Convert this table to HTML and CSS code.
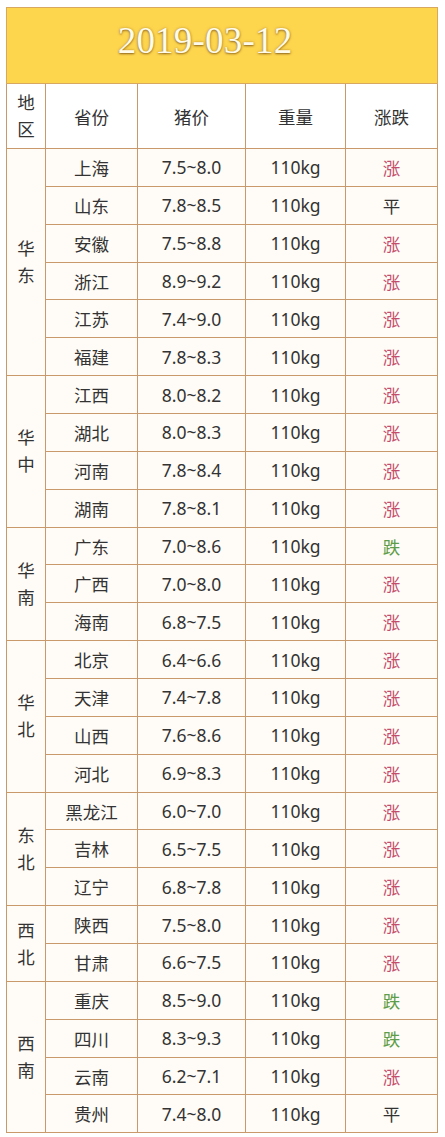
FILE: index.html
```html
<!DOCTYPE html>
<html lang="zh">
<head>
<meta charset="utf-8">
<title>2019-03-12 猪价</title>
<link rel="stylesheet" href="styles.css">
</head>
<body>
<div class="page">
<table class="price">
  <colgroup>
    <col class="c-region"><col class="c-prov"><col class="c-price"><col class="c-weight"><col class="c-chg">
  </colgroup>
  <thead>
    <tr class="title-row"><th colspan="5"><span class="title">2019-03-12</span></th></tr>
    <tr class="head-row">
      <th class="region">地<br>区</th><th>省份</th><th>猪价</th><th>重量</th><th>涨跌</th>
    </tr>
  </thead>
  <tbody>
    <tr><td class="region" rowspan="6">华<br>东</td><td>上海</td><td>7.5~8.0</td><td>110kg</td><td class="up">涨</td></tr>
    <tr><td>山东</td><td>7.8~8.5</td><td>110kg</td><td class="flat">平</td></tr>
    <tr><td>安徽</td><td>7.5~8.8</td><td>110kg</td><td class="up">涨</td></tr>
    <tr><td>浙江</td><td>8.9~9.2</td><td>110kg</td><td class="up">涨</td></tr>
    <tr><td>江苏</td><td>7.4~9.0</td><td>110kg</td><td class="up">涨</td></tr>
    <tr><td>福建</td><td>7.8~8.3</td><td>110kg</td><td class="up">涨</td></tr>

    <tr><td class="region" rowspan="4">华<br>中</td><td>江西</td><td>8.0~8.2</td><td>110kg</td><td class="up">涨</td></tr>
    <tr><td>湖北</td><td>8.0~8.3</td><td>110kg</td><td class="up">涨</td></tr>
    <tr><td>河南</td><td>7.8~8.4</td><td>110kg</td><td class="up">涨</td></tr>
    <tr><td>湖南</td><td>7.8~8.1</td><td>110kg</td><td class="up">涨</td></tr>

    <tr><td class="region" rowspan="3">华<br>南</td><td>广东</td><td>7.0~8.6</td><td>110kg</td><td class="down">跌</td></tr>
    <tr><td>广西</td><td>7.0~8.0</td><td>110kg</td><td class="up">涨</td></tr>
    <tr><td>海南</td><td>6.8~7.5</td><td>110kg</td><td class="up">涨</td></tr>

    <tr><td class="region" rowspan="4">华<br>北</td><td>北京</td><td>6.4~6.6</td><td>110kg</td><td class="up">涨</td></tr>
    <tr><td>天津</td><td>7.4~7.8</td><td>110kg</td><td class="up">涨</td></tr>
    <tr><td>山西</td><td>7.6~8.6</td><td>110kg</td><td class="up">涨</td></tr>
    <tr><td>河北</td><td>6.9~8.3</td><td>110kg</td><td class="up">涨</td></tr>

    <tr><td class="region" rowspan="3">东<br>北</td><td>黑龙江</td><td>6.0~7.0</td><td>110kg</td><td class="up">涨</td></tr>
    <tr><td>吉林</td><td>6.5~7.5</td><td>110kg</td><td class="up">涨</td></tr>
    <tr><td>辽宁</td><td>6.8~7.8</td><td>110kg</td><td class="up">涨</td></tr>

    <tr><td class="region" rowspan="2">西<br>北</td><td>陕西</td><td>7.5~8.0</td><td>110kg</td><td class="up">涨</td></tr>
    <tr><td>甘肃</td><td>6.6~7.5</td><td>110kg</td><td class="up">涨</td></tr>

    <tr><td class="region" rowspan="4">西<br>南</td><td>重庆</td><td>8.5~9.0</td><td>110kg</td><td class="down">跌</td></tr>
    <tr><td>四川</td><td>8.3~9.3</td><td>110kg</td><td class="down">跌</td></tr>
    <tr><td>云南</td><td>6.2~7.1</td><td>110kg</td><td class="up">涨</td></tr>
    <tr><td>贵州</td><td>7.4~8.0</td><td>110kg</td><td class="flat">平</td></tr>
  </tbody>
</table>
</div>
</body>
</html>
```

FILE: styles.css
```css
html, body {
  margin: 0;
  padding: 0;
  background: #ffffff;
}

.page {
  padding: 7px 0 0 6px;
}

.price {
  border-collapse: collapse;
  table-layout: fixed;
  width: 432px;
  background: #fffcf7;
  font-family: "Noto Sans", "Noto Sans CJK SC", sans-serif;
  font-size: 17.5px;
  color: #333333;
}

.c-region { width: 39px; }
.c-prov { width: 92px; }
.c-price { width: 108px; }
.c-weight { width: 100px; }
.c-chg { width: 92px; }

.price th,
.price td {
  border: 1px solid #c9996b;
  padding: 0;
  text-align: center;
  vertical-align: middle;
  font-weight: normal;
}

.title-row th {
  height: 65px;
  background: #fed64e;
  border-color: #d8a860;
  padding: 0 34px 10px 0;
}

.title {
  font-family: "Liberation Serif", "DejaVu Serif", serif;
  font-size: 37px;
  color: #fffbea;
  text-shadow: 0 1px 2px rgba(120, 80, 20, 0.75), 0 0 3px rgba(150, 100, 30, 0.5);
  letter-spacing: 0.2px;
}

.head-row th {
  height: 64px;
  background: #ffffff;
}

.head-row th.region,
td.region {
  line-height: 27px;
}

.price tbody tr {
  height: 37.86px;
}

td.up { color: #c44d6c; }
td.down { color: #5e9c49; }
td.flat { color: #333333; }
```
